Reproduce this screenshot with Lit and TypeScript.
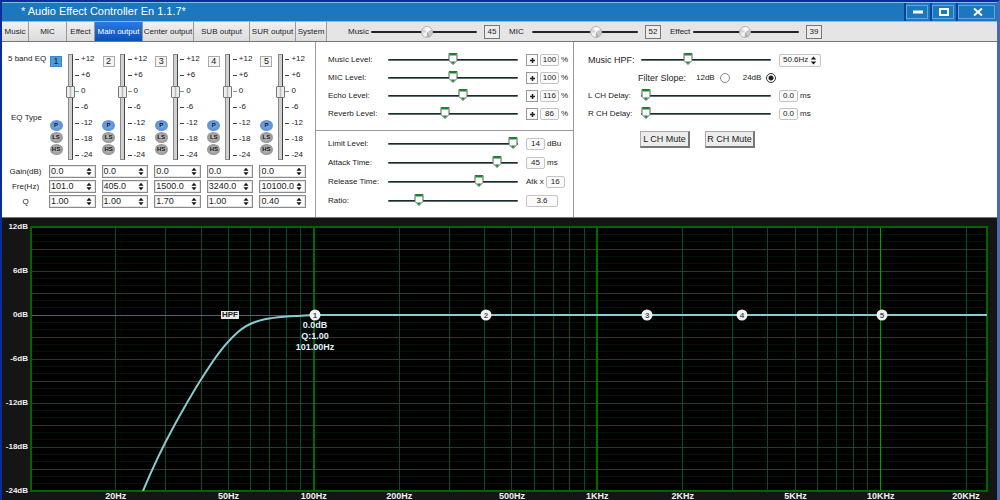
import { LitElement, html, svg, css } from "lit";
import { customElement, property, state } from "lit/decorators.js";
import { classMap } from "lit/directives/class-map.js";

const DB_MAX = 12;
const DB_MIN = -24;
const F_MIN = 10.05;
const F_MAX = 23700;

const xOf = (f: number) =>
  (100 * Math.log10(f / F_MIN)) / Math.log10(F_MAX / F_MIN);
const yOf = (db: number) => (100 * (DB_MAX - db)) / (DB_MAX - DB_MIN);

const spinIcon = html`<svg class="spin" viewBox="0 0 7 10" aria-hidden="true">
  <path d="M3.5 0.5 6.5 4H.5Z M3.5 9.5 6.5 6H.5Z" fill="#151515" />
</svg>`;

const sliderStyles = css`
  .slider {
    appearance: none;
    width: 100%;
    min-width: 0;
    height: 14px;
    margin: 0;
    background: transparent;
  }
  .slider::-webkit-slider-runnable-track {
    height: 2px;
    background: linear-gradient(#1c2b2c 50%, #5d7070 50%);
    border-radius: 1px;
  }
  .slider::-webkit-slider-thumb {
    appearance: none;
    width: 10px;
    height: 12px;
    margin-top: -6px;
    border: 0;
    background: url("data:image/svg+xml,%3Csvg xmlns='http://www.w3.org/2000/svg' viewBox='0 0 10 12'%3E%3Cpath d='M1 .5h8v7l-2.500 2.500L5 11.500 3.500 10 1 7.500Z' fill='%23fff' stroke='%23506056'/%3E%3Cpath d='M1.500 .5h7v2h-7z M3 8.500h4L5 11.300Z' fill='%23108a24'/%3E%3C/svg%3E")
      no-repeat center / 10px 12px;
  }
`;

@customElement("knob-strip")
class KnobStrip extends LitElement {
  @property() label = "";
  @property({ type: Number }) position = 0;
  @property() value = "";

  static styles = css`
    :host {
      display: flex;
      align-items: center;
    }
    .name {
      width: 23px;
      white-space: nowrap;
    }
    .track {
      appearance: none;
      flex: 1;
      min-width: 0;
      height: 14px;
      margin: 0 7px 0 0;
      background: transparent;
    }
    .track::-webkit-slider-runnable-track {
      height: 2px;
      background: #242424;
      border-radius: 1px;
    }
    .track::-webkit-slider-thumb {
      appearance: none;
      width: 12px;
      height: 12px;
      margin-top: -5px;
      border: 1px solid #b4b4b4;
      border-radius: 50%;
      background: conic-gradient(#fff 0 12%, #c9c9c9 20% 38%, #a0a0a0 45%, #f4f4f4 55% 65%, #d0d0d0 78%, #fff);
    }
    .value {
      box-sizing: border-box;
      width: 16px;
      height: 14px;
      border: 1px solid #777;
      background: #ececec;
      text-align: center;
      line-height: 12px;
    }
  `;

  render() {
    return html`
      <label class="name" for="level">${this.label}</label>
      <input class="track" id="level" type="range" .value=${String(this.position)} />
      <output class="value" for="level">${this.value}</output>
    `;
  }
}

@customElement("level-row")
class LevelRow extends LitElement {
  @property() label = "";
  @property({ type: Number }) position = 0;
  @property() value = "";
  @property() unit = "";
  @property() prefix = "";
  @property() kind = "";

  static styles = [
    sliderStyles,
    css`
      :host {
        display: grid;
        grid-template-columns: var(--label-width, 60px) 1fr var(--readout-width, 52px);
        align-items: center;
        height: 18px;
      }
      .name {
        white-space: nowrap;
      }
      .name.large {
        font-size: 9px;
      }
      .readout {
        display: flex;
        align-items: center;
        gap: 2px;
        padding-left: 8px;
        white-space: nowrap;
      }
      .plus {
        display: grid;
        flex: none;
        place-items: center;
        box-sizing: border-box;
        width: 12px;
        height: 12px;
        padding: 0;
        border: 1px solid #999;
        background: #fafafa;
      }
      .plus svg {
        width: 7px;
        height: 7px;
      }
      .value {
        flex: none;
        box-sizing: border-box;
        width: 19px;
        height: 12px;
        border: 1px solid #c4c4c4;
        border-radius: 2px;
        background: #fafafa;
        text-align: center;
        line-height: 10px;
      }
      .value.wide {
        width: 32px;
      }
      .value.spinner {
        display: flex;
        align-items: center;
        justify-content: space-between;
        width: 42px;
        height: 13px;
        padding: 0 3px;
      }
      .spin {
        width: 7px;
        height: 9px;
      }
    `,
  ];

  render() {
    const hpf = this.kind === "spinner";
    return html`
      <label class=${classMap({ name: true, large: hpf })} for="level">${this.label}</label>
      <input class="slider" id="level" type="range" .value=${String(this.position)} />
      <div class="readout">
        ${this.kind === "plus"
          ? html`<button class="plus" aria-label="Increase ${this.label}">
              <svg viewBox="0 0 7 7"><path d="M3.5 1v5M1 3.500h5" stroke="#222" stroke-width="1.500" /></svg>
            </button>`
          : ""}
        ${this.prefix ? html`<span>${this.prefix}</span>` : ""}
        <output class=${classMap({ value: true, wide: this.kind === "wide", spinner: hpf })} for="level"
          >${this.value}${hpf ? spinIcon : ""}</output
        >
        ${this.unit ? html`<span>${this.unit}</span>` : ""}
      </div>
    `;
  }
}

interface Band {
  gain: string;
  freq: string;
  q: string;
  hz: number;
}

const BANDS: Band[] = [
  { gain: "0.0", freq: "101.0", q: "1.00", hz: 101 },
  { gain: "0.0", freq: "405.0", q: "1.00", hz: 405 },
  { gain: "0.0", freq: "1500.0", q: "1.70", hz: 1500 },
  { gain: "0.0", freq: "3240.0", q: "1.00", hz: 3240 },
  { gain: "0.0", freq: "10100.0", q: "0.40", hz: 10100 },
];

@customElement("eq-bands")
class EqBands extends LitElement {
  @state() selected = 0;

  static styles = css`
    :host {
      display: grid;
      grid-template-columns: 47px repeat(5, 1fr);
      grid-template-rows: 109px;
      grid-auto-rows: 13px;
      row-gap: 2px;
      padding: 12px 3px 9px 0;
      border-right: 1px solid #999;
    }
    .heads {
      display: flex;
      flex-direction: column;
      gap: 49px;
      padding-left: 6px;
      line-height: 10px;
      white-space: nowrap;
    }
    .type-head {
      padding-left: 3px;
    }
    .band {
      display: flex;
      height: 106px;
    }
    .buttons {
      display: flex;
      flex-direction: column;
      align-items: center;
      gap: 1px;
      width: 14px;
      margin-right: 2px;
      padding: 2px 0 5px;
      box-sizing: border-box;
    }
    .number {
      width: 12px;
      height: 11px;
      margin-bottom: auto;
      padding: 0;
      border: 1px solid #aaa;
      background: #f4f4f4;
      color: #222;
      font: 9px/9px "Liberation Sans", Arial, sans-serif;
    }
    .number.on {
      border-color: #3a86c8;
      background: #4a9be0;
    }
    .type {
      width: 13px;
      height: 11px;
      padding: 0;
      border: 1px solid #999;
      border-radius: 50%;
      background: radial-gradient(#c4c4c4, #8b8b8b);
      color: #111;
      font: bold 6px/9px "Liberation Sans", Arial, sans-serif;
    }
    .type.on {
      border-color: #6b95cf;
      background: radial-gradient(#7fb0ee, #4a86d0);
    }
    .fader {
      appearance: none;
      writing-mode: vertical-lr;
      direction: rtl;
      width: 10px;
      height: 106px;
      margin: 0;
      background: transparent;
    }
    .fader::-webkit-slider-runnable-track {
      box-sizing: border-box;
      width: 5px;
      border: 1px solid #8a8a8a;
      border-right-color: #444;
      background: #d0d0d0;
    }
    .fader::-webkit-slider-thumb {
      appearance: none;
      box-sizing: border-box;
      width: 9px;
      height: 12px;
      margin-left: -3px;
      border: 1px solid #777;
      border-radius: 1px;
      background: linear-gradient(90deg, #eee 30%, #bbb 50%, #eee 70%);
    }
    .scale {
      display: flex;
      flex-direction: column;
      align-self: center;
    }
    .tick {
      display: flex;
      align-items: center;
      gap: 2px;
      height: 16px;
    }
    .tick::before {
      content: "";
      width: 4px;
      height: 1px;
      background: #444;
    }
    .tick.zero::before {
      background: #4aa0d8;
    }
    .row-name {
      align-self: center;
      text-align: center;
      white-space: nowrap;
    }
    .field {
      display: flex;
      align-items: center;
      box-sizing: border-box;
      width: calc(100% - 6px);
      height: 13px;
      padding: 0 3px 0 1px;
      border: 1px solid #8a8a8a;
      outline: 1px solid #e4e4e4;
      outline-offset: -2px;
      background: #fff;
    }
    .field input {
      flex: 1;
      min-width: 0;
      width: 0;
      padding: 0;
      border: 0;
      background: transparent;
      color: #222;
      font: 9px/11px "Liberation Sans", Arial, sans-serif;
    }
    .spin {
      flex: none;
      width: 6px;
      height: 9px;
    }
  `;

  private fields(name: string, key: "gain" | "freq" | "q") {
    return html`
      <span class="row-name">${name}</span>
      ${BANDS.map(
        (b, i) => html`<label class="field">
          <input type="text" inputmode="decimal" aria-label="${name} band ${i + 1}" .value=${b[key]} />${spinIcon}
        </label>`
      )}
    `;
  }

  render() {
    return html`
      <div class="heads"><span>5 band EQ</span><span class="type-head">EQ Type</span></div>
      ${BANDS.map(
        (_, i) => html`<div class="band">
          <div class="buttons">
            <button
              class=${classMap({ number: true, on: i === this.selected })}
              @click=${() => (this.selected = i)}
            >${i + 1}</button>
            <button class="type on">P</button>
            <button class="type">LS</button>
            <button class="type">HS</button>
          </div>
          <input class="fader" type="range" min="-24" max="12" .value=${"0"} aria-label="Band ${i + 1} gain" />
          <div class="scale">
            ${["+12", "+6", "0", "-6", "-12", "-18", "-24"].map(
              (t) => html`<span class=${classMap({ tick: true, zero: t === "0" })}>${t}</span>`
            )}
          </div>
        </div>`
      )}
      ${this.fields("Gain(dB)", "gain")} ${this.fields("Fre(Hz)", "freq")} ${this.fields("Q", "q")}
    `;
  }
}

@customElement("response-chart")
class ResponseChart extends LitElement {
  static styles = css`
    :host {
      display: grid;
      grid-template-columns: 29px 1fr 10px;
      border-top: 1px solid #777;
      background: #151515;
      color: #f0f0f0;
      font-size: 9px;
      font-weight: bold;
      line-height: 10px;
    }
    .levels {
      display: flex;
      flex-direction: column;
      justify-content: space-between;
      padding: 4px 3px 4px 0;
      text-align: right;
      font-size: 8px;
    }
    .main {
      display: grid;
      grid-template-rows: 1fr 9px;
      min-width: 0;
      padding-top: 9px;
    }
    .plot {
      position: relative;
      background: #000;
    }
    .grid {
      position: absolute;
      inset: 0;
      width: 100%;
      height: 100%;
      overflow: visible;
    }
    .minor {
      stroke: #001508;
    }
    .major {
      stroke: #00502c;
    }
    .strong {
      stroke: #00a000;
    }
    .decade {
      stroke: #006c00;
      stroke-width: 2;
    }
    .frame {
      fill: none;
      stroke: #006400;
      stroke-width: 2;
    }
    .curve {
      fill: none;
      stroke: #86cdd0;
      stroke-width: 2;
      vector-effect: non-scaling-stroke;
    }
    .node {
      position: absolute;
      width: 11px;
      height: 11px;
      padding: 0;
      border: 0;
      border-radius: 50%;
      transform: translate(-50%, -50%);
      background: #f2f2f2;
      color: #456;
      font: bold 8px/11px "Liberation Sans", Arial, sans-serif;
    }
    .hpf {
      position: absolute;
      transform: translate(-50%, -50%);
      height: 8px;
      padding: 0 1px;
      background: #e8e8e8;
      color: #222;
      font-size: 8px;
      line-height: 8px;
    }
    .info {
      position: absolute;
      transform: translateX(-50%);
      padding-top: 5px;
      color: #dff2fa;
      line-height: 11px;
      text-align: center;
    }
    .freqs {
      position: relative;
      overflow: hidden;
    }
    .freq {
      position: absolute;
      transform: translateX(-50%);
      line-height: 11px;
    }
  `;

  private gridLines() {
    const faint = [];
    const lines = [];
    const decades = [];
    for (let db = DB_MIN + 1; db < DB_MAX; db++) {
      const line = (kind: string) =>
        svg`<line class=${kind} x1="0" x2="100%" y1="${yOf(db)}%" y2="${yOf(db)}%" />`;
      if (db === 0) decades.push(line("strong"));
      else if (db % 3 === 0) lines.push(line("major"));
      else faint.push(line("minor"));
    }
    for (const decade of [10, 100, 1000, 10000]) {
      for (let n = 1; n < 10; n++) {
        const f = decade * n;
        if (f <= F_MIN || f >= F_MAX) continue;
        const line = (kind: string) =>
          svg`<line class=${kind} y1="0" y2="100%" x1="${xOf(f)}%" x2="${xOf(f)}%" />`;
        if (n === 1) decades.push(line(decade === 10000 ? "strong" : "decade"));
        else lines.push(line("major"));
      }
    }
    return [...faint, ...lines, ...decades];
  }

  render() {
    const labels: [string, number][] = [
      ["20Hz", 20], ["50Hz", 50], ["100Hz", 100], ["200Hz", 200], ["500Hz", 500],
      ["1KHz", 1000], ["2KHz", 2000], ["5KHz", 5000], ["10KHz", 10000], ["20KHz", 20000],
    ];
    const zero = yOf(0);
    return html`
      <div class="levels">
        ${[12, 6, 0, -6, -12, -18, -24].map((d) => html`<span>${d}dB</span>`)}
      </div>
      <div class="main">
        <div class="plot">
          <svg class="grid" aria-hidden="true">
            <g shape-rendering="crispEdges">
              ${this.gridLines()}
              <rect class="frame" width="100%" height="100%" />
            </g>
            <svg width="100%" height="100%" viewBox="0 0 956 264" preserveAspectRatio="none">
              <path
                class="curve"
                d="M112 264C122 240 132 219 143 199S162 165 171 151S191 119 207 105S240 90 283 88H956"
              />
            </svg>
          </svg>
          <span class="hpf" style="left:${xOf(50.6)}%;top:${zero}%">HPF</span>
          ${BANDS.map(
            (b, i) => html`<button class="node" style="left:${xOf(b.hz)}%;top:${zero}%">${i + 1}</button>`
          )}
          <div class="info" style="left:${xOf(101)}%;top:${zero}%">
            <div>0.0dB</div>
            <div>Q:1.00</div>
            <div>101.00Hz</div>
          </div>
        </div>
        <div class="freqs">
          ${labels.map(([t, f]) => html`<span class="freq" style="left:${xOf(f)}%">${t}</span>`)}
        </div>
      </div>
    `;
  }
}

@customElement("app-root")
class AppRoot extends LitElement {
  @state() tab = "Main output";

  static styles = css`
    :host {
      display: flex;
      flex-direction: column;
      box-sizing: border-box;
      height: 100vh;
      min-height: 440px;
      overflow: hidden;
      border: solid #0a2c9c;
      border-width: 2px 3px 0 2px;
      border-right-color: #4a68b8;
      background: #fff;
      color: #222;
      font: 8px/10px "Liberation Sans", Arial, sans-serif;
    }
    .title-bar {
      display: flex;
      flex: none;
      box-sizing: border-box;
      height: 20px;
      border: solid #7fbcec;
      border-width: 1px 0;
      background: #1b78bf;
    }
    .title {
      flex: 1;
      margin: 0;
      padding-left: 19px;
      color: #fff;
      font-size: 11px;
      font-weight: normal;
      line-height: 16px;
    }
    .window-button {
      display: grid;
      place-items: center;
      width: 26px;
      padding: 0;
      border: solid #0b3f98;
      border-width: 0 0 0 2px;
      outline: 1px solid #62a6dd;
      outline-offset: -3px;
      background: #1b78bf;
    }
    .window-button.close {
      width: 41px;
    }
    .window-button svg {
      width: 12px;
      height: 10px;
    }
    .toolbar {
      display: flex;
      flex: none;
      height: 19px;
      border-bottom: 1px solid #777;
      background: #e5e5e5;
    }
    .tabs {
      display: grid;
      grid-template-columns: 27px 38px 28px 48px 51px 56px 46px 31px;
    }
    .tab {
      padding: 0;
      border: 0;
      border-right: 1px solid #999;
      background: linear-gradient(#f0f0f0, #dcdcdc);
      color: #222;
      font: inherit;
      white-space: nowrap;
    }
    .tab.on {
      background: linear-gradient(#2a7be0, #0b50bd);
      color: #fff;
    }
    .knobs {
      display: grid;
      flex: 1;
      grid-template-columns: repeat(3, 152px);
      gap: 9px;
      padding-left: 21px;
    }
    .panels {
      display: grid;
      flex: none;
      grid-template-columns: 314fr 258fr 423fr;
    }
    .levels {
      border-right: 1px solid #999;
    }
    .group {
      padding: 9px 3px 7px 12px;
    }
    .group + .group {
      display: grid;
      row-gap: 1px;
      padding: 4px 3px 7px 12px;
      border-top: 1px solid #999;
    }
    .filter {
      --label-width: 53px;
      --readout-width: 44px;
      max-width: 227px;
      padding: 9px 3px 0 14px;
    }
    .slope {
      display: flex;
      align-items: center;
      height: 18px;
      padding-left: 50px;
    }
    .slope-name {
      width: 58px;
      font-size: 9px;
    }
    .choice {
      display: flex;
      align-items: center;
      gap: 5px;
      margin-right: 13px;
    }
    .choice input {
      appearance: none;
      box-sizing: border-box;
      width: 10px;
      height: 10px;
      margin: 0;
      border: 1px solid #888;
      border-radius: 50%;
      background: #fff;
    }
    .choice input:checked {
      border-color: #333;
      background: radial-gradient(circle, #222 2px, #fff 3px);
    }
    .mutes {
      display: flex;
      gap: 15px;
      padding: 8px 0 0 52px;
    }
    .mute {
      width: 50px;
      height: 17px;
      padding: 0;
      border: 1px solid #aaa;
      border-right: 2px solid #777;
      border-bottom: 2px solid #777;
      background: #ececec;
      color: #222;
      font: 9px/12px "Liberation Sans", Arial, sans-serif;
      white-space: nowrap;
    }
    response-chart {
      flex: 1;
      min-height: 0;
    }
  `;

  render() {
    const tabs = ["Music", "MIC", "Effect", "Main output", "Center output", "SUB output", "SUR  output", "System"];
    return html`
      <header class="title-bar">
        <h1 class="title">* Audio Effect Controller En 1.1.7*</h1>
        <button class="window-button" aria-label="Minimize">
          <svg viewBox="0 0 12 10"><path d="M1 5h10" stroke="#fff" stroke-width="3" /></svg>
        </button>
        <button class="window-button" aria-label="Maximize">
          <svg viewBox="0 0 12 10"><rect x="2" y="2" width="8" height="6" fill="none" stroke="#fff" stroke-width="2" /></svg>
        </button>
        <button class="window-button close" aria-label="Close">
          <svg viewBox="0 0 12 10"><path d="M2 1.500 10 8.500M10 1.500 2 8.500" stroke="#fff" stroke-width="2" /></svg>
        </button>
      </header>
      <nav class="toolbar">
        <div class="tabs">
          ${tabs.map(
            (t) => html`<button class=${classMap({ tab: true, on: t === this.tab })} @click=${() => (this.tab = t)}>${t}</button>`
          )}
        </div>
        <div class="knobs">
          <knob-strip label="Music" position="53" value="45"></knob-strip>
          <knob-strip label="MIC" position="62" value="52"></knob-strip>
          <knob-strip label="Effect" position="49" value="39"></knob-strip>
        </div>
      </nav>
      <main class="panels">
        <eq-bands></eq-bands>
        <div class="levels">
          <section class="group">
            <level-row label="Music Level:" position="50" value="100" unit="%" kind="plus"></level-row>
            <level-row label="MIC Level:" position="50" value="100" unit="%" kind="plus"></level-row>
            <level-row label="Echo Level:" position="58" value="116" unit="%" kind="plus"></level-row>
            <level-row label="Reverb Level:" position="43" value="86" unit="%" kind="plus"></level-row>
          </section>
          <section class="group">
            <level-row label="Limit Level:" position="100" value="14" unit="dBu"></level-row>
            <level-row label="Attack Time:" position="87" value="45" unit="ms"></level-row>
            <level-row label="Release Time:" position="72" value="16" prefix="Atk x"></level-row>
            <level-row label="Ratio:" position="22" value="3.6" kind="wide"></level-row>
          </section>
        </div>
        <section class="filter">
          <level-row label="Music HPF:" position="35" value="50.6Hz" kind="spinner"></level-row>
          <div class="slope" role="radiogroup" aria-label="Filter Slope">
            <span class="slope-name">Filter Slope:</span>
            <label class="choice">12dB <input type="radio" name="slope" /></label>
            <label class="choice">24dB <input type="radio" name="slope" checked /></label>
          </div>
          <level-row label="L CH Delay:" position="0" value="0.0" unit="ms"></level-row>
          <level-row label="R CH Delay:" position="0" value="0.0" unit="ms"></level-row>
          <div class="mutes">
            <button class="mute">L CH Mute</button>
            <button class="mute">R CH Mute</button>
          </div>
        </section>
      </main>
      <response-chart></response-chart>
    `;
  }
}
